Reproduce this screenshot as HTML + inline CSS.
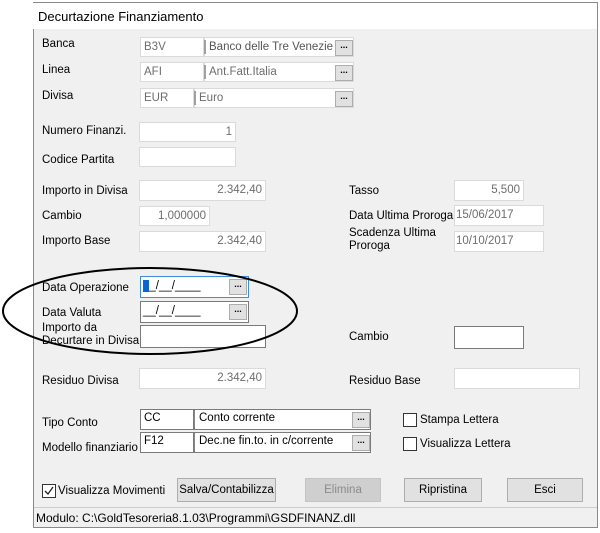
<!DOCTYPE html>
<html><head><meta charset="utf-8"><style>
*{margin:0;padding:0;box-sizing:border-box}
body{width:600px;height:533px;background:#fff;position:relative;overflow:hidden;font-family:"Liberation Sans",sans-serif;font-size:11.5px;color:#000}
.win{position:absolute;left:33px;top:2px;width:565px;height:526px;background:#f0f0f0;border:1px solid #8a8a8a}
.title{position:absolute;left:33px;top:3px;width:564px;height:26px;background:#fff}
.t{position:absolute;white-space:nowrap;line-height:13px}
.b{position:absolute;background:#fff;border:1px solid #dadada;color:#6d6d6d;padding:0 3px;line-height:18px;white-space:nowrap;overflow:hidden}
.b.r{text-align:right}
.b.k{color:#000;border-color:#7a7a7a}
.bt{position:absolute;width:18px;height:16px;background:#e1e1e1;border:1px solid #adadad;font-size:9px;line-height:9px;text-align:center;color:#000;font-weight:bold}
.sep{position:absolute;width:2px;background:#a0a0a0}
.cb{position:absolute;width:14px;height:14px;border:1px solid #333;background:#fff}
.btn{position:absolute;height:24px;background:#e1e1e1;border:1px solid #adadad;text-align:center;line-height:22px}
</style></head><body>
<div class="win"></div>
<div class="title"></div>
<div class="t" style="left:38px;top:10px;font-size:13px">Decurtazione Finanziamento</div>

<div class="t" style="left:42px;top:38px">Banca</div>
<div class="b" style="left:140px;top:37px;width:64px;height:20px">B3V</div>
<div class="b" style="left:204px;top:37px;width:150px;height:20px;padding-left:4px;color:#555">Banco delle Tre Venezie</div>
<div class="sep" style="left:204px;top:40px;height:14px"></div>
<div class="bt" style="left:335px;top:40px">...</div>

<div class="t" style="left:42px;top:64px">Linea</div>
<div class="b" style="left:140px;top:62px;width:64px;height:20px">AFI</div>
<div class="b" style="left:204px;top:62px;width:150px;height:20px;padding-left:4px">Ant.Fatt.Italia</div>
<div class="sep" style="left:204px;top:65px;height:14px"></div>
<div class="bt" style="left:335px;top:65px">...</div>

<div class="t" style="left:42px;top:90px">Divisa</div>
<div class="b" style="left:140px;top:88px;width:54px;height:20px">EUR</div>
<div class="b" style="left:194px;top:88px;width:160px;height:20px;padding-left:4px">Euro</div>
<div class="sep" style="left:194px;top:91px;height:14px"></div>
<div class="bt" style="left:335px;top:91px">...</div>

<div class="t" style="left:42px;top:125px">Numero Finanzi.</div>
<div class="b r" style="left:139px;top:122px;width:97px;height:20px">1</div>
<div class="t" style="left:42px;top:154px">Codice Partita</div>
<div class="b" style="left:139px;top:147px;width:97px;height:20px"></div>

<div class="t" style="left:42px;top:185px">Importo in Divisa</div>
<div class="b r" style="left:139px;top:180px;width:127px;height:21px">2.342,40</div>
<div class="t" style="left:42px;top:210px">Cambio</div>
<div class="b r" style="left:139px;top:206px;width:71px;height:20px">1,000000</div>
<div class="t" style="left:42px;top:235px">Importo Base</div>
<div class="b r" style="left:139px;top:231px;width:127px;height:21px">2.342,40</div>

<div class="t" style="left:349px;top:185px">Tasso</div>
<div class="b r" style="left:454px;top:180px;width:70px;height:21px">5,500</div>
<div class="t" style="left:349px;top:210px">Data Ultima Proroga</div>
<div class="b" style="left:454px;top:205px;width:90px;height:21px;padding-left:1px">15/06/2017</div>
<div class="t" style="left:349px;top:227px">Scadenza Ultima<br>Proroga</div>
<div class="b" style="left:454px;top:231px;width:90px;height:21px;padding-left:1px">10/10/2017</div>

<div class="t" style="left:42px;top:282px">Data Operazione</div>
<div class="b k" style="left:140px;top:276px;width:109px;height:22px;border-color:#3c8ce0;color:#000;padding-left:2px"><span style="background:#0a64d8;color:#0a64d8">_</span>_/__/____</div>
<div class="bt" style="left:229px;top:279px">...</div>
<div class="t" style="left:42px;top:307px">Data Valuta</div>
<div class="b k" style="left:140px;top:301px;width:109px;height:22px;color:#000;padding-left:2px">__/__/____</div>
<div class="bt" style="left:229px;top:304px">...</div>
<div class="t" style="left:42px;top:322px">Importo da<br>Decurtare in Divisa</div>
<div class="b k" style="left:140px;top:325px;width:126px;height:23px"></div>

<div class="t" style="left:349px;top:331px">Cambio</div>
<div class="b k" style="left:454px;top:326px;width:70px;height:23px"></div>

<div class="t" style="left:42px;top:375px">Residuo Divisa</div>
<div class="b r" style="left:139px;top:368px;width:127px;height:21px">2.342,40</div>
<div class="t" style="left:349px;top:375px">Residuo Base</div>
<div class="b" style="left:454px;top:368px;width:126px;height:21px"></div>

<div class="t" style="left:42px;top:417px">Tipo Conto</div>
<div class="b k" style="left:140px;top:409px;width:54px;height:21px;color:#000;line-height:17px">CC</div>
<div class="b k" style="left:194px;top:409px;width:177px;height:21px;color:#000;line-height:17px;padding-left:4px">Conto corrente</div>
<div class="sep" style="left:194px;top:411px;height:16px;width:1px;background:#888"></div>
<div class="bt" style="left:352px;top:412px">...</div>
<div class="t" style="left:42px;top:442px">Modello finanziario</div>
<div class="b k" style="left:140px;top:432px;width:54px;height:21px;color:#000;line-height:17px">F12</div>
<div class="b k" style="left:194px;top:432px;width:177px;height:21px;color:#000;line-height:17px;padding-left:4px">Dec.ne fin.to. in c/corrente</div>
<div class="sep" style="left:194px;top:434px;height:16px;width:1px;background:#888"></div>
<div class="bt" style="left:352px;top:435px">...</div>

<div class="cb" style="left:403px;top:413px"></div>
<div class="t" style="left:420px;top:414px">Stampa Lettera</div>
<div class="cb" style="left:403px;top:437px"></div>
<div class="t" style="left:420px;top:438px">Visualizza Lettera</div>

<div class="cb" style="left:42px;top:484px"><svg width="12" height="12" style="position:absolute;left:0;top:0"><path d="M2 6 L5 9 L10 2" stroke="#222" stroke-width="1.3" fill="none"/></svg></div>
<div class="t" style="left:58px;top:485px">Visualizza Movimenti</div>
<div class="btn" style="left:177px;top:478px;width:99px">Salva/Contabilizza</div>
<div class="btn" style="left:305px;top:478px;width:76px;background:#cfcfcf;border-color:#c4c4c4;color:#8a8a8a">Elimina</div>
<div class="btn" style="left:404px;top:478px;width:78px">Ripristina</div>
<div class="btn" style="left:507px;top:478px;width:76px">Esci</div>

<div style="position:absolute;left:34px;top:507px;width:563px;height:1px;background:#ccc"></div>
<div class="t" style="left:36px;top:512px;font-size:12px">Modulo: C:\GoldTesoreria8.1.03\Programmi\GSDFINANZ.dll</div>

<svg width="600" height="533" style="position:absolute;left:0;top:0;pointer-events:none"><ellipse cx="150" cy="311" rx="147" ry="43" fill="none" stroke="#000" stroke-width="2"/></svg>
</body></html>
